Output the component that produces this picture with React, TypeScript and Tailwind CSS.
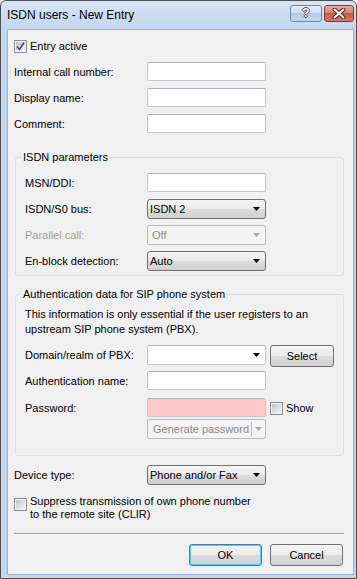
import React from 'react';

const COMBO_BG =
    'bg-[linear-gradient(#f3f3f3_0%,#ebebeb_50%,#dddddd_50%,#cfcfcf_100%)]';

const CheckBox: React.FC<{ checked?: boolean; className?: string }> = ({ checked, className }) => (
    <span
        className={`flex h-[13px] w-[13px] shrink-0 items-center justify-center border border-[#8e8f8f] bg-[#f4f4f4] ${className ?? ''}`}
    >
        <span className="relative flex h-[9px] w-[9px] items-center justify-center bg-gradient-to-br from-[#b9bec4] via-[#dde0e3] to-[#f7f7f7]">
            {checked && (
                <svg width="9" height="9" viewBox="0 0 9 9" className="absolute left-0 top-0">
                    <path d="M1 4.5 L3.5 7.5 L8 0.5" fill="none" stroke="#2c4c9c" strokeWidth="1.6" />
                </svg>
            )}
        </span>
    </span>
);

const TextBox: React.FC<{ pink?: boolean }> = ({ pink }) => (
    <div
        className={`h-[19px] w-[119px] shrink-0 rounded-[2px] border border-[#c3c7cd] border-t-[#adb1b8] ${
            pink ? 'bg-[#ffc8c8]' : 'bg-white'
        }`}
    />
);

const Arrow: React.FC<{ color?: string }> = ({ color = '#000' }) => (
    <svg width="7" height="4" viewBox="0 0 7 4" className="shrink-0">
        <path d="M0 0 H7 L3.5 4 Z" fill={color} />
    </svg>
);

const Combo: React.FC<{ value: string; disabled?: boolean }> = ({ value, disabled }) =>
    disabled ? (
        <div className="flex h-[20px] w-[119px] shrink-0 items-center rounded-[2px] border border-[#b8bcbf] bg-[#f4f4f4] pl-[4px] pr-[5px] text-[#8a8a8a]">
            <span>{value}</span>
            <span className="ml-auto">
                <Arrow color="#a8a8a8" />
            </span>
        </div>
    ) : (
        <div
            className={`flex h-[20px] w-[119px] shrink-0 items-center rounded-[3px] border border-[#707070] ${COMBO_BG} pl-[2px] pr-[5px]`}
        >
            <span>{value}</span>
            <span className="ml-auto">
                <Arrow />
            </span>
        </div>
    );

const Button: React.FC<{ label: string; w: string; focused?: boolean }> = ({ label, w, focused }) => (
    <div
        className={`flex h-[22px] ${w} items-center justify-center rounded-[3px] border ${
            focused ? 'border-[#3c7fb1] shadow-[inset_0_0_0_1px_#48d0f8]' : 'border-[#707070]'
        } ${COMBO_BG}`}
    >
        {label}
    </div>
);

const Label: React.FC<{ w: string; children: React.ReactNode; disabled?: boolean }> = ({ w, children, disabled }) => (
    <span className={`${w} mt-[4px] shrink-0 ${disabled ? 'text-[#a0a0a0]' : ''}`}>{children}</span>
);

export default function App() {
    return (
        <div className="flex h-[579px] w-[357px] flex-col rounded-t-[6px] border border-[#4a4f57] bg-[linear-gradient(#d7e4f4_0px,#c3d6ee_28px,#c3d6ee_100%)] pb-[3px] pl-[6px] pr-[2px] font-['Liberation_Sans',Arial,sans-serif] text-[11px] leading-[13px] text-black">
            {/* title bar */}
            <div className="flex h-[28px] shrink-0 items-start">
                <span className="mt-[7px] text-[12px] leading-[15px]">ISDN users - New Entry</span>
                <div className="ml-auto mt-[4px] flex gap-[2px]">
                    <div className="flex h-[17px] w-[32px] items-center justify-center rounded-[3px] border border-[#6d84a5] bg-[linear-gradient(#e6eef8_0%,#cddcee_50%,#b6cbe6_50%,#c5d7ee_100%)] text-[12px] font-bold leading-[13px] text-white [text-shadow:1px_0_#3d5272,-1px_0_#3d5272,0_1px_#3d5272,0_-1px_#3d5272]">
                        ?
                    </div>
                    <div className="flex h-[17px] w-[30px] items-center justify-center rounded-[3px] border border-[#7d3b33] bg-[linear-gradient(#e9a99c_0%,#d88170_50%,#c75a46_50%,#d77c64_100%)]">
                        <svg width="14" height="11" viewBox="0 0 14 11">
                            <path d="M2.5 1.5 L11.5 9.5 M11.5 1.5 L2.5 9.5" stroke="#4a2420" strokeWidth="4" strokeLinecap="round" />
                            <path d="M2.5 1.5 L11.5 9.5 M11.5 1.5 L2.5 9.5" stroke="#ffffff" strokeWidth="2" strokeLinecap="round" />
                        </svg>
                    </div>
                </div>
            </div>

            {/* client area */}
            <div className="flex flex-1 flex-col border border-[#9db3cf] bg-[#f0f0f0]">
                <div className="ml-[6px] mt-[10px] flex items-center gap-[3px]">
                    <CheckBox checked />
                    <span>Entry active</span>
                </div>

                <div className="ml-[6px] mt-[9px] flex flex-col gap-[7px]">
                    <div className="flex items-start">
                        <Label w="w-[133px]">Internal call number:</Label>
                        <TextBox />
                    </div>
                    <div className="flex items-start">
                        <Label w="w-[133px]">Display name:</Label>
                        <TextBox />
                    </div>
                    <div className="flex items-start">
                        <Label w="w-[133px]">Comment:</Label>
                        <TextBox />
                    </div>
                </div>

                {/* ISDN parameters */}
                <fieldset className="ml-[7px] mt-[18px] w-[329px] rounded-[3px] border border-[#d5dfe5] px-[9px] pb-[4px]">
                    <legend className="-ml-[4px] px-[2px]">ISDN parameters</legend>
                    <div className="mt-[9px] flex flex-col gap-[6px]">
                        <div className="flex h-[20px] items-start">
                            <Label w="w-[122px]">MSN/DDI:</Label>
                            <TextBox />
                        </div>
                        <div className="flex h-[20px] items-start">
                            <Label w="w-[122px]">ISDN/S0 bus:</Label>
                            <Combo value="ISDN 2" />
                        </div>
                        <div className="flex h-[20px] items-start">
                            <Label w="w-[122px]" disabled>
                                Parallel call:
                            </Label>
                            <Combo value="Off" disabled />
                        </div>
                        <div className="flex h-[20px] items-start">
                            <Label w="w-[122px]">En-block detection:</Label>
                            <Combo value="Auto" />
                        </div>
                    </div>
                </fieldset>

                {/* SIP authentication */}
                <fieldset className="ml-[7px] mt-[12px] w-[329px] rounded-[3px] border border-[#d5dfe5] px-[9px] pb-[16px]">
                    <legend className="-ml-[4px] px-[2px]">Authentication data for SIP phone system</legend>
                    <p className="mt-[6px] leading-[15px]">
                        This information is only essential if the user registers to an
                        <br />
                        upstream SIP phone system (PBX).
                    </p>
                    <div className="mt-[8px] flex h-[20px] items-start">
                        <Label w="w-[122px]">Domain/realm of PBX:</Label>
                        <div className="flex h-[20px] w-[119px] items-center justify-end rounded-[2px] border border-[#c3c7cd] border-t-[#adb1b8] bg-white pr-[5px]">
                            <Arrow />
                        </div>
                        <div className="ml-[4px]">
                            <Button label="Select" w="w-[64px] h-[20px]" />
                        </div>
                    </div>
                    <div className="mt-[6px] flex items-start">
                        <Label w="w-[122px]">Authentication name:</Label>
                        <TextBox />
                    </div>
                    <div className="mt-[8px] flex items-center">
                        <span className="w-[122px] shrink-0 pt-[1px]">Password:</span>
                        <TextBox pink />
                        <CheckBox className="ml-[4px] mt-[2px]" />
                        <span className="ml-[3px] mt-[2px]">Show</span>
                    </div>
                    <div className="ml-[122px] mt-[2px] flex h-[20px] w-[119px] items-center rounded-[2px] border border-[#b8bcbf] bg-[#f4f4f4] pl-[5px] text-[#8a8a8a]">
                        <span>Generate password</span>
                        <span className="ml-auto h-[14px] w-px bg-[#b8bcbf]" />
                        <span className="px-[3px]">
                            <Arrow color="#a8a8a8" />
                        </span>
                    </div>
                </fieldset>

                <div className="ml-[6px] mt-[9px] flex h-[20px] items-start">
                    <Label w="w-[133px]">Device type:</Label>
                    <Combo value="Phone and/or Fax" />
                </div>

                <div className="ml-[6px] mt-[10px] flex items-start gap-[3px]">
                    <CheckBox className="mt-[3px]" />
                    <span>
                        Suppress transmission of own phone number
                        <br />
                        to the remote site (CLIR)
                    </span>
                </div>

                <div className="ml-[6px] mt-[12px] h-[2px] w-[330px] border-b border-t border-b-white border-t-[#a0a0a0]" />

                <div className="mt-[9px] flex justify-end gap-[8px] pr-[10px]">
                    <Button label="OK" w="w-[73px]" focused />
                    <Button label="Cancel" w="w-[73px]" />
                </div>
            </div>
        </div>
    );
}
